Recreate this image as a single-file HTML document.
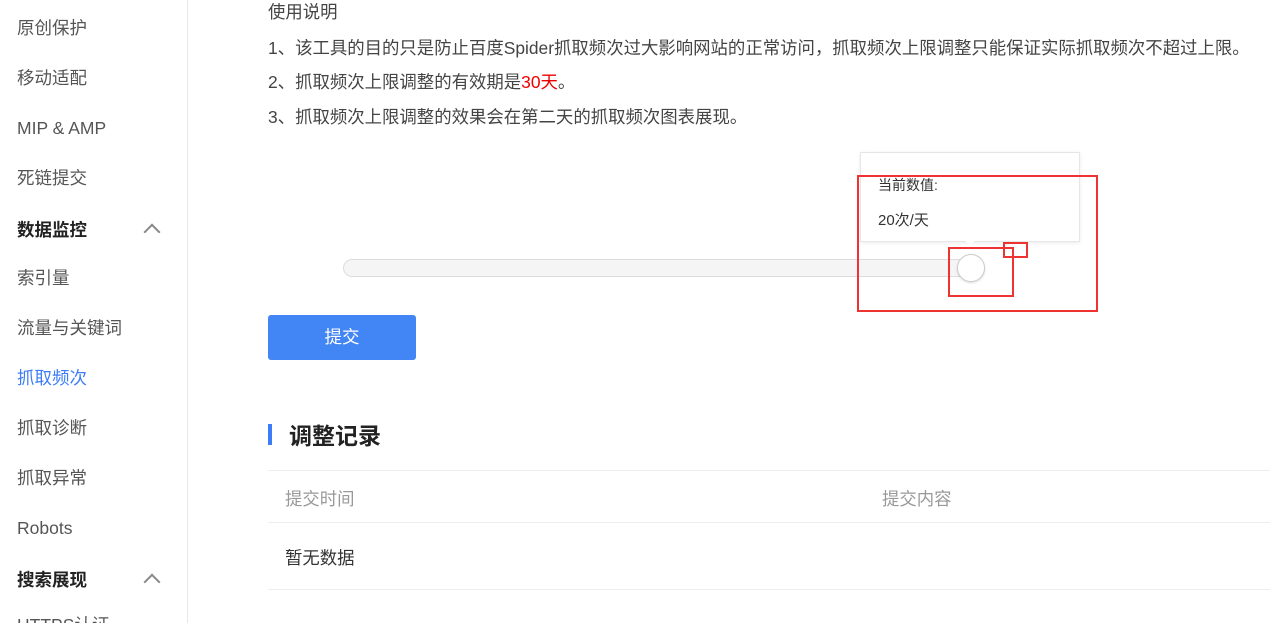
<!DOCTYPE html>
<html><head><meta charset="utf-8"><style>
html,body{margin:0;width:1270px;height:623px;overflow:hidden}
body{background:#fff;font-family:"Liberation Sans","Noto Sans CJK SC",sans-serif;position:relative;color:#333}
.side{position:absolute;left:0;top:0;width:187px;height:623px;border-right:1px solid #e8e8e8}
.si{position:absolute;left:17px;font-size:17.5px;color:#555;line-height:20px;white-space:nowrap}
.sh{font-weight:bold;color:#222}
.chev{position:absolute;left:146px;width:10px;height:10px;border-left:2px solid #888;border-top:2px solid #888;transform:rotate(45deg)}
.t{position:absolute;left:268px;font-size:17.4px;color:#444;line-height:20px;white-space:nowrap}
</style></head><body>
<div class="side">
<div class="si" style="top:18px">原创保护</div>
<div class="si" style="top:68px">移动适配</div>
<div class="si" style="top:118px">MIP &amp; AMP</div>
<div class="si" style="top:168px">死链提交</div>
<div class="si sh" style="top:220px">数据监控</div><div class="chev" style="top:226px"></div>
<div class="si" style="top:268px">索引量</div>
<div class="si" style="top:318px">流量与关键词</div>
<div class="si" style="top:368px;color:#3e7cf7">抓取频次</div>
<div class="si" style="top:418px">抓取诊断</div>
<div class="si" style="top:468px">抓取异常</div>
<div class="si" style="top:518px">Robots</div>
<div class="si sh" style="top:570px">搜索展现</div><div class="chev" style="top:576px"></div>
<div class="si" style="top:615px">HTTPS认证</div>
</div>
<div class="t" style="top:2px">使用说明</div>
<div class="t" style="top:38px">1、该工具的目的只是防止百度Spider抓取频次过大影响网站的正常访问，抓取频次上限调整只能保证实际抓取频次不超过上限。</div>
<div class="t" style="top:72px">2、抓取频次上限调整的有效期是<span style="color:#e00">30天</span>。</div>
<div class="t" style="top:107px">3、抓取频次上限调整的效果会在第二天的抓取频次图表展现。</div>
<div style="position:absolute;left:343px;top:259px;width:630px;height:16px;border:1px solid #ddd;border-radius:9px;background:#f5f5f5"></div>
<div style="position:absolute;left:957px;top:254px;width:26px;height:26px;border:1px solid #ccc;border-radius:50%;background:#fff;box-shadow:0 1px 2px rgba(0,0,0,.15)"></div>
<div style="position:absolute;left:860px;top:152px;width:218px;height:88px;border:1px solid #e6e6e6;background:#fff;box-shadow:0 1px 4px rgba(0,0,0,.08)"></div>
<div style="position:absolute;left:966px;top:236px;width:8px;height:8px;background:#fff;transform:rotate(45deg)"></div>
<div style="position:absolute;left:878px;top:175px;font-size:14px;color:#333">当前数值:</div>
<div style="position:absolute;left:878px;top:209px;font-size:15px;color:#333">20次/天</div>
<div style="position:absolute;left:857px;top:175px;width:237px;height:133px;border:2px solid #e33"></div>
<div style="position:absolute;left:948px;top:247px;width:62px;height:46px;border:2px solid #e33"></div>
<div style="position:absolute;left:1003px;top:242px;width:21px;height:12px;border:2px solid #e33"></div>
<div style="position:absolute;left:268px;top:315px;width:148px;height:45px;background:#4285f4;border-radius:3px;color:#fff;font-size:17.5px;line-height:45px;text-align:center">提交</div>
<div style="position:absolute;left:268px;top:424px;width:4px;height:21px;background:#3e7cf7"></div>
<div style="position:absolute;left:289px;top:417px;font-size:23px;font-weight:bold;color:#222">调整记录</div>
<div style="position:absolute;left:268px;top:470px;width:1002px;border-top:1px solid #eee"></div>
<div style="position:absolute;left:285px;top:486px;font-size:17.4px;color:#999">提交时间</div>
<div style="position:absolute;left:882px;top:486px;font-size:17.4px;color:#999">提交内容</div>
<div style="position:absolute;left:268px;top:522px;width:1002px;border-top:1px solid #eee"></div>
<div style="position:absolute;left:285px;top:545px;font-size:17.4px;color:#333">暂无数据</div>
<div style="position:absolute;left:268px;top:589px;width:1002px;border-top:1px solid #eee"></div>
</body></html>
